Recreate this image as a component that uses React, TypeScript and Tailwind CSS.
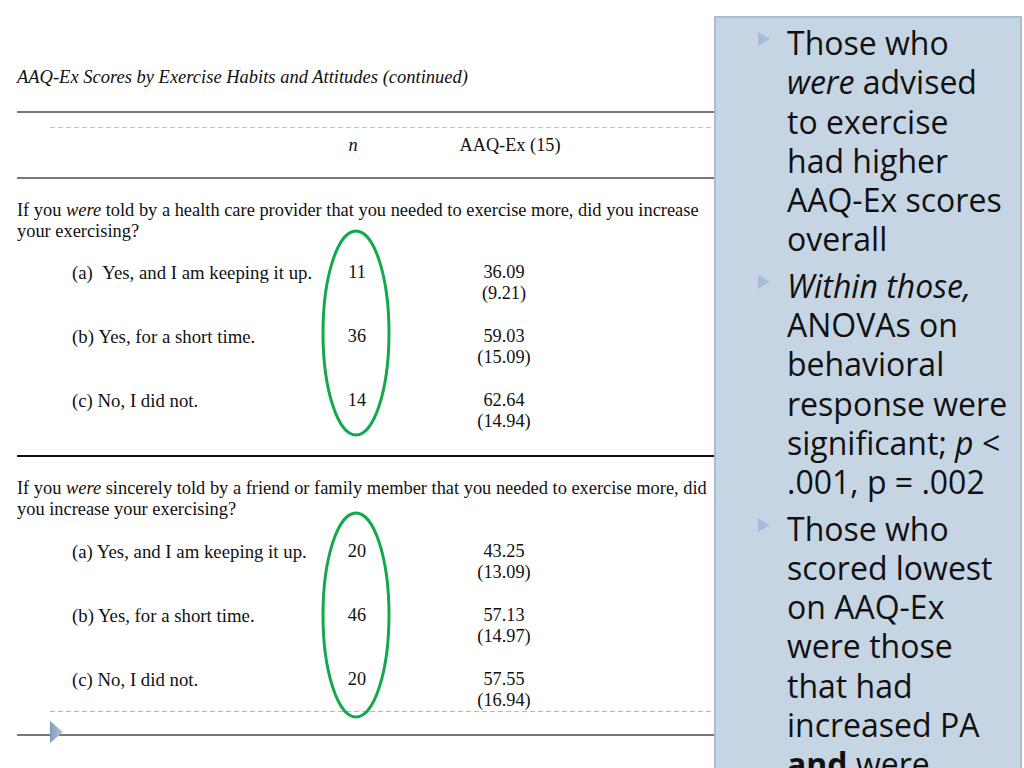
import React from "react";

interface Row {
  label: string;
  n: string;
  mean: string;
  sd: string;
}

const section1: Row[] = [
  { label: "(a)\u00a0\u00a0Yes, and I am keeping it up.", n: "11", mean: "36.09", sd: "(9.21)" },
  { label: "(b)\u00a0Yes, for a short time.", n: "36", mean: "59.03", sd: "(15.09)" },
  { label: "(c) No, I did not.", n: "14", mean: "62.64", sd: "(14.94)" },
];

const section2: Row[] = [
  { label: "(a) Yes, and I am keeping it up.", n: "20", mean: "43.25", sd: "(13.09)" },
  { label: "(b) Yes, for a short time.", n: "46", mean: "57.13", sd: "(14.97)" },
  { label: "(c) No, I did not.", n: "20", mean: "57.55", sd: "(16.94)" },
];

function DataRows({ rows, first }: { rows: Row[]; first: string }) {
  return (
    <div className={`flex flex-col gap-[22px] text-[18.3px] ${first}`}>
      {rows.map((r) => (
        <div key={r.label} className="flex">
          <div className="w-[305px] pl-[55px] whitespace-nowrap text-[18.8px]">{r.label}</div>
          <div className="w-[70px] text-center">{r.n}</div>
          <div className="w-[224px] text-center">
            <div>{r.mean}</div>
            <div>{r.sd}</div>
          </div>
        </div>
      ))}
    </div>
  );
}

function Ellipse({ top }: { top: string }) {
  return (
    <svg
      className={`absolute left-[320px] ${top}`}
      width="72"
      height="210"
      viewBox="0 0 72 210"
    >
      <ellipse cx="36" cy="105" rx="33" ry="102" fill="none" stroke="#13a84c" strokeWidth="3" />
    </svg>
  );
}

function Bullet() {
  return (
    <svg className="absolute left-[-29px] top-[9px]" width="12" height="14" viewBox="0 0 12 14">
      <polygon points="0,0 12,7 0,14" fill="#a7bcd6" />
    </svg>
  );
}

export default function App() {
  return (
    <div className="w-[1024px] h-[768px] overflow-hidden bg-white flex">
      {/* Table image area */}
      <div
        className="relative w-[714px] shrink-0 pl-[17px] pt-[67px] text-[18px] leading-[21px] text-[#111]"
        style={{ fontFamily: '"Liberation Serif", "Times New Roman", serif' }}
      >
        <div className="italic whitespace-nowrap text-[18.5px]">
          AAQ-Ex Scores by Exercise Habits and Attitudes (continued)
        </div>
        <div className="mt-[23px] h-[2px] bg-[#777]" />
        <div className="mt-[14px] ml-[33px] h-[1px] bg-[repeating-linear-gradient(90deg,#c4c4c4_0_5px,transparent_5px_8px)]" />
        <div className="mt-[7px] flex text-[18.3px]">
          <div className="w-[305px]" />
          <div className="w-[62px] text-center italic">n</div>
          <div className="w-[252px] text-center">AAQ-Ex (15)</div>
        </div>
        <div className="mt-[21px] h-[2px] bg-[#777]" />
        <div className="mt-[21px] whitespace-nowrap text-[18.4px]">
          If you <span className="italic">were</span> told by a health care provider that you needed to
          exercise more, did you increase
          <br />
          your exercising?
        </div>
        <DataRows rows={section1} first="mt-[20px]" />
        <div className="mt-[23px] h-[2px] bg-[#111]" />
        <div className="mt-[21px] whitespace-nowrap text-[18.4px]">
          If you <span className="italic">were</span> sincerely told by a friend or family member that
          you needed to exercise more, did
          <br />
          you increase your exercising?
        </div>
        <DataRows rows={section2} first="mt-[21px]" />
        <div className="ml-[33px] h-[1px] bg-[repeating-linear-gradient(90deg,#a9bccf_0_5px,transparent_5px_8px)]" />
        <div className="mt-[22px] h-[2px] bg-[#777]" />

        <Ellipse top="top-[228px]" />
        <Ellipse top="top-[510px]" />

        <svg className="absolute left-[50px] top-[721px]" width="14" height="22" viewBox="0 0 14 22">
          <defs>
            <linearGradient id="tri" x1="0" y1="0" x2="1" y2="0">
              <stop offset="0" stopColor="#7f9cc0" />
              <stop offset="1" stopColor="#b5c6dc" />
            </linearGradient>
          </defs>
          <polygon points="0,0 13,11 0,22" fill="url(#tri)" />
        </svg>
      </div>

      {/* Bullet panel */}
      <div className="mt-[16px] w-[308px] shrink-0 h-[800px] bg-[#c6d5e4] border-2 border-[#a8bcd3] pl-[71px] pt-[5px]">
        <div
          className="text-[32px] leading-[39.3px] text-[#111] whitespace-nowrap"
          style={{ fontFamily: '"Open Sans", "Noto Sans", sans-serif' }}
        >
          <div className="relative">
            <Bullet />
            Those who
            <br />
            <span className="italic">were</span> advised
            <br />
            to exercise
            <br />
            had higher
            <br />
            AAQ-Ex scores
            <br />
            overall
          </div>
          <div className="relative mt-[7px]">
            <Bullet />
            <span className="italic">Within those,</span>
            <br />
            ANOVAs on
            <br />
            behavioral
            <br />
            response were
            <br />
            significant; <span className="italic">p</span> &lt;
            <br />
            .001, p = .002
          </div>
          <div className="relative mt-[7px]">
            <Bullet />
            Those who
            <br />
            scored lowest
            <br />
            on AAQ-Ex
            <br />
            were those
            <br />
            that had
            <br />
            increased PA
            <br />
            <span className="font-bold">and</span> were
          </div>
        </div>
      </div>
    </div>
  );
}
